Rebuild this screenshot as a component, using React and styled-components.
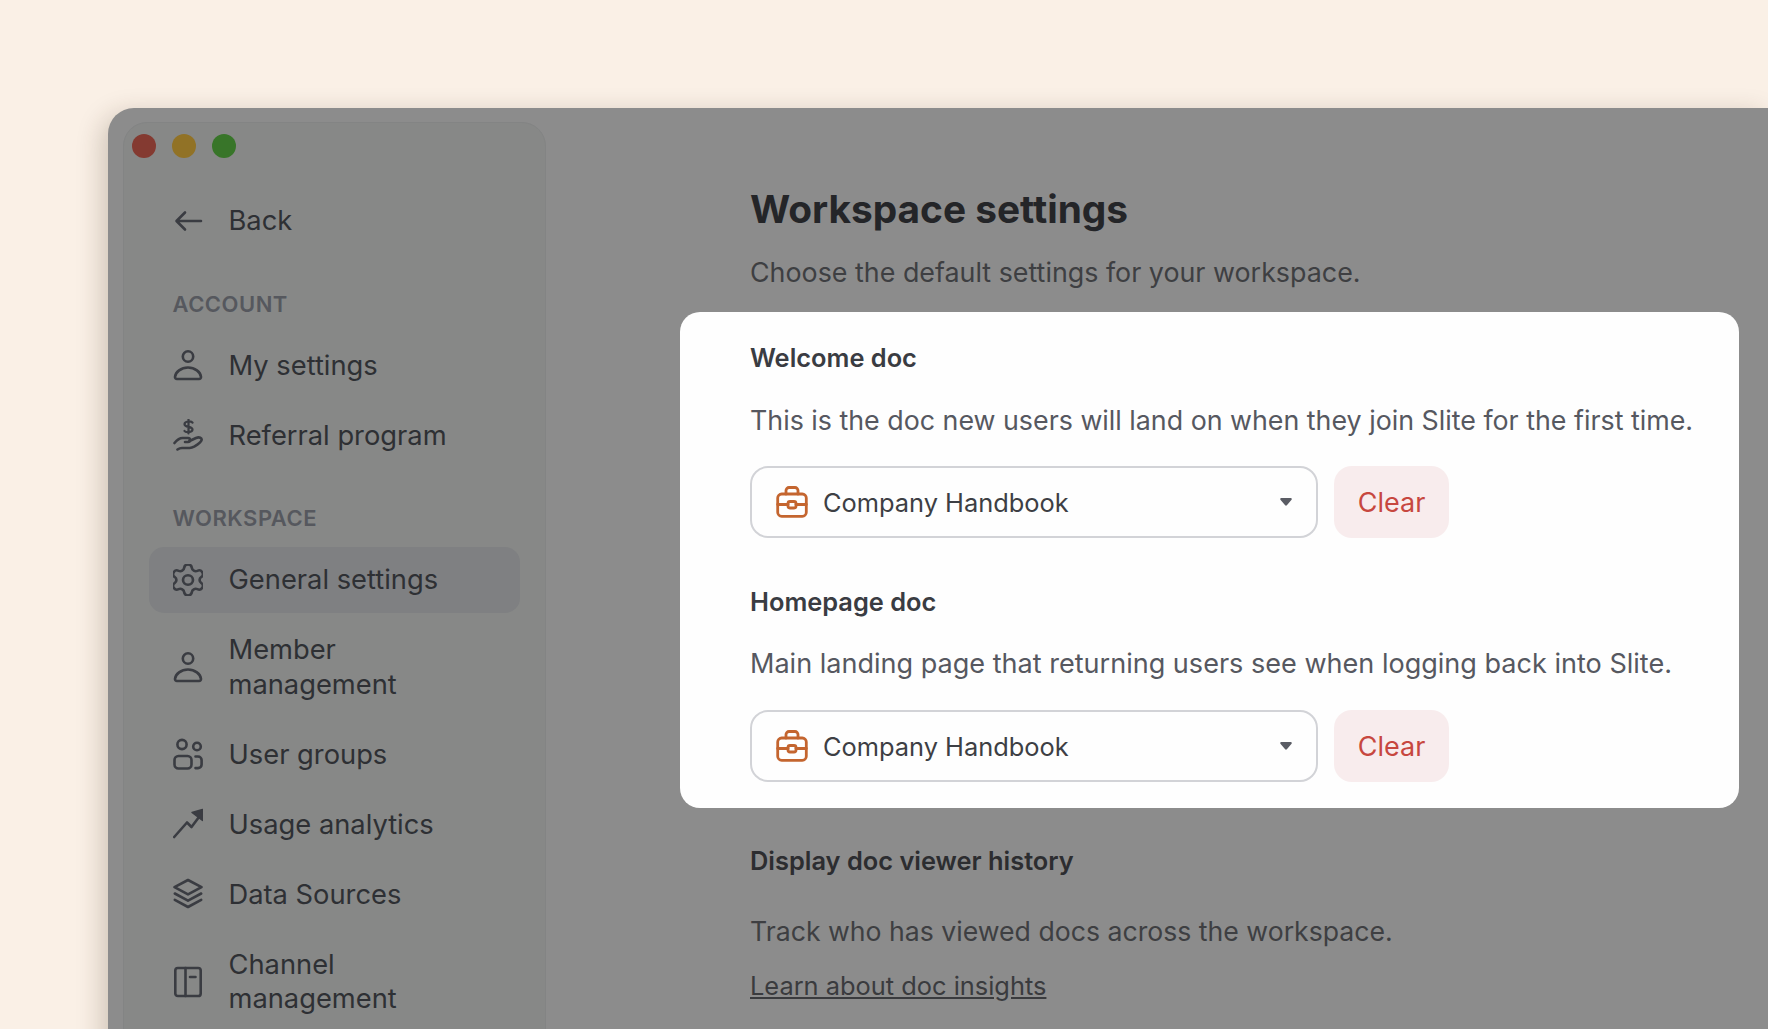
import React from "react";
import styled, { createGlobalStyle } from "styled-components";

const Global = createGlobalStyle`
  html, body { margin: 0; height: 1029px; overflow: hidden; background: #faf0e6; }
  * { box-sizing: border-box; }
  body { font-family: Inter, "Noto Sans", sans-serif; }
`;

const Page = styled.div`
  height: 1029px;
  padding: 108px 0 0 108px;
  overflow: hidden;
`;
const Window = styled.div`
  display: flex;
  height: 1100px;
  background: #8c8c8c;
  border-radius: 26px 0 0 0;
  box-shadow: -6px 6px 26px rgba(60, 40, 20, 0.22);
`;
const Sidebar = styled.aside`
  flex: 0 0 423px;
  margin: 14px 0 0 15px;
  padding: 0 25px 0 25px;
  background: #878887;
  border: 1.5px solid #838484;
  border-radius: 24px 24px 0 0;
`;
const Traffic = styled.div`
  display: flex;
  gap: 16px;
  padding: 11px 0 0 8px;
  margin: 0 0 0 -25px;
  height: 64.5px;
`;
const Dot = styled.span`
  width: 24px;
  height: 24px;
  border-radius: 50%;
  background: ${(p) => p.$c};
`;
const NavList = styled.div`
  display: flex;
  flex-direction: column;
  gap: 3.5px;
`;
const Item = styled.div`
  display: flex;
  align-items: center;
  gap: 25.5px;
  padding: 15.25px 24px;
  border-radius: 15px;
  font-size: 27.3px;
  line-height: 34.5px;
  color: #2e3034;
  background: ${(p) => (p.$active ? "#7f8082" : "transparent")};
  svg { flex: 0 0 30px; color: #3a3c42; }
`;
const ItemLabel = styled.span`
  flex: 0 1 200px;
  padding-top: 1.5px;
  ${(p) => p.$wide && "flex-basis: auto;"}
`;
const Section = styled.div`
  margin: ${(p) => p.$top}px 0 14.4px 23.5px;
  font-size: 22px;
  line-height: 28px;
  font-weight: 600;
  letter-spacing: 0.5px;
  color: #56585e;
`;
const Main = styled.main`
  flex: 1;
  padding: 78px 0 0 204px;
`;
const Title = styled.h1`
  margin: 0;
  font-size: 38.8px;
  line-height: 46px;
  font-weight: 700;
  color: #242528;
`;
const Subtitle = styled.p`
  margin: 23px 0 0;
  font-size: 26.85px;
  line-height: 34px;
  color: #3e3f42;
`;
const Card = styled.section`
  width: 1059px;
  margin: 23px 0 0 -70px;
  padding: 28px 0 0 70px;
  height: 496px;
  background: #fefefe;
  border-radius: 20px;
`;
const FieldTitle = styled.h2`
  margin: ${(p) => p.$top || 0}px 0 0;
  font-size: 25.4px;
  line-height: 36px;
  font-weight: 600;
  color: ${(p) => p.$c || "#3a3c42"};
`;
const Desc = styled.p`
  margin: ${(p) => p.$top}px 0 0;
  font-size: ${(p) => p.$size || 26.8}px;
  line-height: 34px;
  color: ${(p) => p.$c || "#565860"};
  white-space: nowrap;
`;
const Row = styled.div`
  display: flex;
  gap: 16px;
  margin-top: 29px;
`;
const Select = styled.div`
  display: flex;
  align-items: center;
  gap: 15px;
  width: 568px;
  height: 72px;
  padding: 0 24px 0 24px;
  border: 2px solid #d2d3d7;
  border-radius: 18px;
  font-size: 25.4px;
  color: #3d3f44;
  svg.case { color: #c4652f; flex: 0 0 32px; }
  svg.caret { color: #5a5c64; margin-left: auto; }
`;
const Clear = styled.button`
  width: 115px;
  height: 72px;
  border: 0;
  border-radius: 18px;
  background: #f8eced;
  color: #c7473f;
  font: 400 27px Inter, sans-serif;
`;
const Link = styled.a`
  display: block;
  margin-top: 21px;
  font-size: 25.4px;
  line-height: 34px;
  color: #3a3b3e;
  text-decoration: underline;
`;

const Ic = ({ children, h = 32 }) => (
  <svg width="30" height={h} viewBox={`0 0 30 ${h}`} fill="none" stroke="currentColor" strokeWidth="2.6" strokeLinecap="round" strokeLinejoin="round">
    {children}
  </svg>
);
const Arrow = () => <Ic><path d="M28 16H4M12 7.5 3.5 16l8.5 8.5" /></Ic>;
const User = () => (
  <Ic>
    <circle cx="15" cy="7.5" r="5.2" />
    <path d="M4 30h22a2 2 0 0 0 2-2.2C27.4 23 22 18.5 15 18.5S2.6 23 2 27.8A2 2 0 0 0 4 30Z" />
  </Ic>
);
const Hand = () => (
  <Ic>
    <path d="M19.5 3.6C18.5 2 11.5 1.8 11.5 5.2c0 3.6 8 1.8 8 5.2 0 3.4-7 3.2-8 1.6M15.5 0.5v14" strokeWidth="2.2" />
    <path d="M1.5 24c2.5-3 5-5 8-5h5.5c2.6 0 2.6 4 0 4H12" />
    <path d="M16.5 22 23 19c3.5-1.4 6 0 5.6 2-.4 2.3-4 4.6-7 6.4-1.6.9-3 1.6-5 1.6H9c-2 0-3.2.6-4.5 1.5" />
  </Ic>
);
const Users = () => (
  <Ic>
    <circle cx="9" cy="6.5" r="4.6" />
    <circle cx="24" cy="8.5" r="3.8" />
    <rect x="1.5" y="18" width="17" height="12.5" rx="4" />
    <path d="M22.5 18.5H25a3.6 3.6 0 0 1 3.6 3.6v4.4a3.6 3.6 0 0 1-3.6 3.6h-2.5" />
  </Ic>
);
const Trend = () => (
  <Ic>
    <path d="M1.2 29 14 14.5l4.5 4.5L26 9" />
    <path d="M19 4.5 29.5 1.5v11Z" fill="currentColor" strokeWidth="1.4" />
  </Ic>
);
const Layers = () => (
  <Ic>
    <path d="M15 2 28.5 9.2 15 16.4 1.5 9.2Z" />
    <path d="M1.8 15.5 15 22.7l13.2-7.2" />
    <path d="M1.8 21.8 15 29l13.2-7.2" />
  </Ic>
);
const Panel = () => (
  <Ic>
    <rect x="2.3" y="2" width="25.4" height="28" rx="2.6" />
    <path d="M12.5 2v28M17 11h5.5" />
  </Ic>
);
const Gear = () => (
  <Ic>
    <g transform="translate(15 16) scale(1.66 1.55) translate(-12 -12)" strokeWidth="1.6">
      <path d="M9.671 4.136a2.34 2.34 0 0 1 4.659 0 2.34 2.34 0 0 0 3.319 1.915 2.34 2.34 0 0 1 2.33 4.033 2.34 2.34 0 0 0 0 3.831 2.34 2.34 0 0 1-2.33 4.033 2.34 2.34 0 0 0-3.319 1.915 2.34 2.34 0 0 1-4.659 0 2.34 2.34 0 0 0-3.32-1.915 2.34 2.34 0 0 1-2.33-4.033 2.34 2.34 0 0 0 0-3.831A2.34 2.34 0 0 1 6.35 6.051a2.34 2.34 0 0 0 3.319-1.915" />
      <circle cx="12" cy="12" r="3" />
    </g>
  </Ic>
);
const Case = () => (
  <svg className="case" width="32" height="32" viewBox="0 0 32 32" fill="none" stroke="currentColor" strokeWidth="2.8" strokeLinecap="round" strokeLinejoin="round">
    <rect x="1.7" y="8" width="28.6" height="22.3" rx="4" />
    <path d="M10 8V4.5a3 3 0 0 1 3-3h6a3 3 0 0 1 3 3V8" />
    <path d="M1.7 18.5H12M20 18.5h10.3" />
    <rect x="12" y="15.5" width="8" height="6.5" rx="2" />
  </svg>
);
const Caret = () => (
  <svg className="caret" width="12" height="8" viewBox="0 0 14 10" preserveAspectRatio="none">
    <path d="M1.5 0h11a1.3 1.3 0 0 1 1 2.1L8 9.2a1.3 1.3 0 0 1-2 0L.5 2.1A1.3 1.3 0 0 1 1.5 0Z" fill="currentColor" />
  </svg>
);

const Nav = ({ icon, children, active, wide }) => (
  <Item $active={active}>
    {icon}
    <ItemLabel $wide={wide}>{children}</ItemLabel>
  </Item>
);
const Picker = () => (
  <Row>
    <Select><Case />Company Handbook<Caret /></Select>
    <Clear>Clear</Clear>
  </Row>
);

export default function App() {
  return (
    <Page>
      <Global />
      <Window>
        <Sidebar>
          <Traffic>
            <Dot $c="#843a31" />
            <Dot $c="#917226" />
            <Dot $c="#387529" />
          </Traffic>
          <Nav icon={<Arrow />} wide>Back</Nav>
          <Section $top={35.7}>ACCOUNT</Section>
          <NavList>
            <Nav icon={<User />} wide>My settings</Nav>
            <Nav icon={<Hand />} wide>Referral program</Nav>
          </NavList>
          <Section $top={35.6}>WORKSPACE</Section>
          <NavList>
            <Nav icon={<Gear />} active wide>General settings</Nav>
            <Nav icon={<User />}>Member management</Nav>
            <Nav icon={<Users />} wide>User groups</Nav>
            <Nav icon={<Trend />} wide>Usage analytics</Nav>
            <Nav icon={<Layers />} wide>Data Sources</Nav>
            <Nav icon={<Panel />}>Channel management</Nav>
          </NavList>
        </Sidebar>
        <Main>
          <Title>Workspace settings</Title>
          <Subtitle>Choose the default settings for your workspace.</Subtitle>
          <Card>
            <FieldTitle>Welcome doc</FieldTitle>
            <Desc $top={27}>This is the doc new users will land on when they join Slite for the first time.</Desc>
            <Picker />
            <FieldTitle $top={46}>Homepage doc</FieldTitle>
            <Desc $top={27} $size={27.05}>Main landing page that returning users see when logging back into Slite.</Desc>
            <Picker />
          </Card>
          <FieldTitle $top={35} $c="#2c2d30">Display doc viewer history</FieldTitle>
          <Desc $top={35} $size={26.65} $c="#3e3f42">Track who has viewed docs across the workspace.</Desc>
          <Link>Learn about doc insights</Link>
        </Main>
      </Window>
    </Page>
  );
}
